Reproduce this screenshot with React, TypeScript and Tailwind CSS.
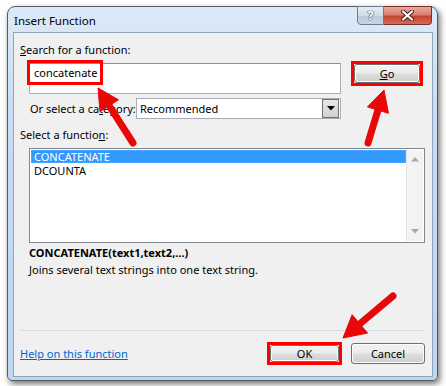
import React from 'react';

// Win7-style "Insert Function" dialog with red callout annotations

const font = "font-['Noto_Sans','Liberation_Sans',sans-serif]";

function Arrow({ tail, tip, head = 21, half = 11 }: { tail: [number, number]; tip: [number, number]; head?: number; half?: number }) {
  const dx = tip[0] - tail[0];
  const dy = tip[1] - tail[1];
  const len = Math.hypot(dx, dy);
  const ux = dx / len;
  const uy = dy / len;
  const bx = tip[0] - ux * head;
  const by = tip[1] - uy * head;
  const nx = -uy;
  const ny = ux;
  const pts = `${tip[0]},${tip[1]} ${bx + nx * half},${by + ny * half} ${bx - nx * half},${by - ny * half}`;
  return (
    <g>
      <line x1={tail[0]} y1={tail[1]} x2={bx + ux * 2} y2={by + uy * 2} stroke="#e80808" strokeWidth={7} strokeLinecap="round" />
      <polygon points={pts} fill="#e80808" stroke="#e80808" strokeWidth={1} strokeLinejoin="round" />
    </g>
  );
}

function WinButton({ children, className = '' }: { children: React.ReactNode; className?: string }) {
  return (
    <button
      type="button"
      className={`flex items-center justify-center rounded-[3px] border border-[#707070] bg-[linear-gradient(180deg,#f2f2f2_0%,#ebebeb_48%,#dddddd_52%,#cfcfcf_100%)] text-[11px] text-black shadow-[inset_0_0_0_1px_#fcfcfc] ${className}`}
    >
      {children}
    </button>
  );
}

export default function App() {
  return (
    <div className={`relative w-[446px] h-[386px] overflow-hidden bg-white pl-[7px] pt-[6px] ${font}`}>
      {/* window */}
      <div className="flex flex-col w-[431px] h-[375px] rounded-t-[8px] rounded-b-[5px] border border-[#4f5a66] bg-[linear-gradient(180deg,#dce9f7_0%,#c8dcf2_30%,#bfd6ef_100%)] shadow-[2px_3px_6px_rgba(0,0,0,0.55)]">
        {/* title bar */}
        <div className="flex h-[25px] items-start">
          <span className="pl-[6px] pt-[6px] text-[11.5px] leading-[16px] text-black">Insert Function</span>
          <div className="ml-auto mr-[5px] -mt-[1px] flex">
            <div className="flex h-[19px] w-[27px] items-center justify-center rounded-bl-[4px] border border-[#6d7c8c] bg-[linear-gradient(180deg,#e6edf5_0%,#cfdbe8_50%,#b8c9da_51%,#c9d7e5_100%)]">
              <span className="text-[13px] font-bold leading-none text-white [text-shadow:0_0_1px_#3b4350,0_0_1px_#3b4350,0_0_1px_#3b4350]">?</span>
            </div>
            <div className="flex h-[19px] w-[48px] items-center justify-center rounded-br-[4px] border border-l-0 border-[#7a3027] bg-[linear-gradient(180deg,#e9a99c_0%,#d98070_45%,#c44533_55%,#d26a59_100%)]">
              <svg width="13" height="11" viewBox="0 0 13 11">
                <path d="M2 1.5L11 9.5M11 1.5L2 9.5" stroke="#4a1a14" strokeWidth="4" strokeLinecap="round" />
                <path d="M2 1.5L11 9.5M11 1.5L2 9.5" stroke="#ffffff" strokeWidth="2.2" strokeLinecap="round" />
              </svg>
            </div>
          </div>
        </div>

        {/* client area */}
        <div className="mx-[5px] flex h-[345px] w-[420px] flex-col border border-[#8fa3b9] bg-[#f0f0f0] text-[11px] leading-[16px] text-black">
          <div className="ml-[6px] mt-[9px]">
            <span className="underline">S</span>earch for a function:
          </div>

          <div className="mt-[3px] flex items-start">
            <div className="relative ml-[15px] mt-[2px] h-[31px] w-[312px] border border-[#abadb3] border-t-[#8e8f8f] bg-white">
              <span className="absolute left-[4px] top-[1px]">concatenate</span>
              <div className="absolute left-[-3px] top-[-4px] h-[25px] w-[76px] border-[3px] border-[#ff0000]" />
            </div>
            <div className="ml-[10px] border-[3px] border-[#ff0000]">
              <WinButton className="h-[19px] w-[66px]">
                <span className="underline">G</span>o
              </WinButton>
            </div>
          </div>

          <div className="mt-[4px] flex items-center">
            <span className="ml-[16px] w-[106px] shrink-0 whitespace-nowrap">
              Or select a ca<span className="underline">t</span>egory:
            </span>
            <div className="flex h-[21px] w-[205px] items-center border border-[#abadb3] bg-white">
              <span className="ml-[3px] flex-1">Recommended</span>
              <div className="mr-[1px] flex h-[19px] w-[17px] items-center justify-center border border-[#707070] bg-[linear-gradient(180deg,#e8e8e8_0%,#d0d0d0_100%)]">
                <svg width="8" height="5" viewBox="0 0 8 5">
                  <path d="M0 0H8L4 4.5Z" fill="#000" />
                </svg>
              </div>
            </div>
          </div>

          <div className="ml-[6px] mt-[8px]">
            Select a functio<span className="underline">n</span>:
          </div>

          <div className="ml-[15px] mt-[5px] flex h-[95px] w-[396px] border border-[#828790] bg-white p-[1px] leading-[13px]">
            <div className="flex-1">
              <div className="border border-dotted border-[#e39a3c] bg-[#3399ff] pl-[2px] text-white leading-[11px]">CONCATENATE</div>
              <div className="pl-[3px] pt-[1px]">DCOUNTA</div>
            </div>
            <div className="flex w-[17px] flex-col items-center justify-between border-l border-[#e6e6e6] bg-[#f3f3f3] py-[7px]">
              <svg width="8" height="5" viewBox="0 0 8 5">
                <path d="M4 0L8 4.5H0Z" fill="#a8a8a8" />
              </svg>
              <svg width="8" height="5" viewBox="0 0 8 5">
                <path d="M0 0H8L4 4.5Z" fill="#a8a8a8" />
              </svg>
            </div>
          </div>

          <div className="ml-[15px] mt-[2px] font-bold">CONCATENATE(text1,text2,...)</div>
          <div className="ml-[15px] mt-[1px]">Joins several text strings into one text string.</div>

          <div className="ml-[6px] mt-[52px] h-px w-[405px] bg-[#d6dee6]" />

          <div className="mt-[11px] flex items-center">
            <a href="#" className="ml-[6px] text-[#0066cc] underline">
              Help on this function
            </a>
            <div className="ml-auto border-[3px] border-[#ff0000]">
              <WinButton className="h-[17px] w-[69px]">OK</WinButton>
            </div>
            <WinButton className="ml-[9px] mr-[7px] h-[21px] w-[74px]">Cancel</WinButton>
          </div>
        </div>
      </div>

      {/* callout arrows */}
      <svg className="pointer-events-none absolute left-0 top-0" width="446" height="386" viewBox="0 0 446 386">
        <Arrow tail={[133, 143]} tip={[98, 88]} />
        <Arrow tail={[368, 143]} tip={[384, 90]} />
        <Arrow tail={[393, 296]} tip={[343, 338]} head={22} half={12} />
      </svg>
    </div>
  );
}
